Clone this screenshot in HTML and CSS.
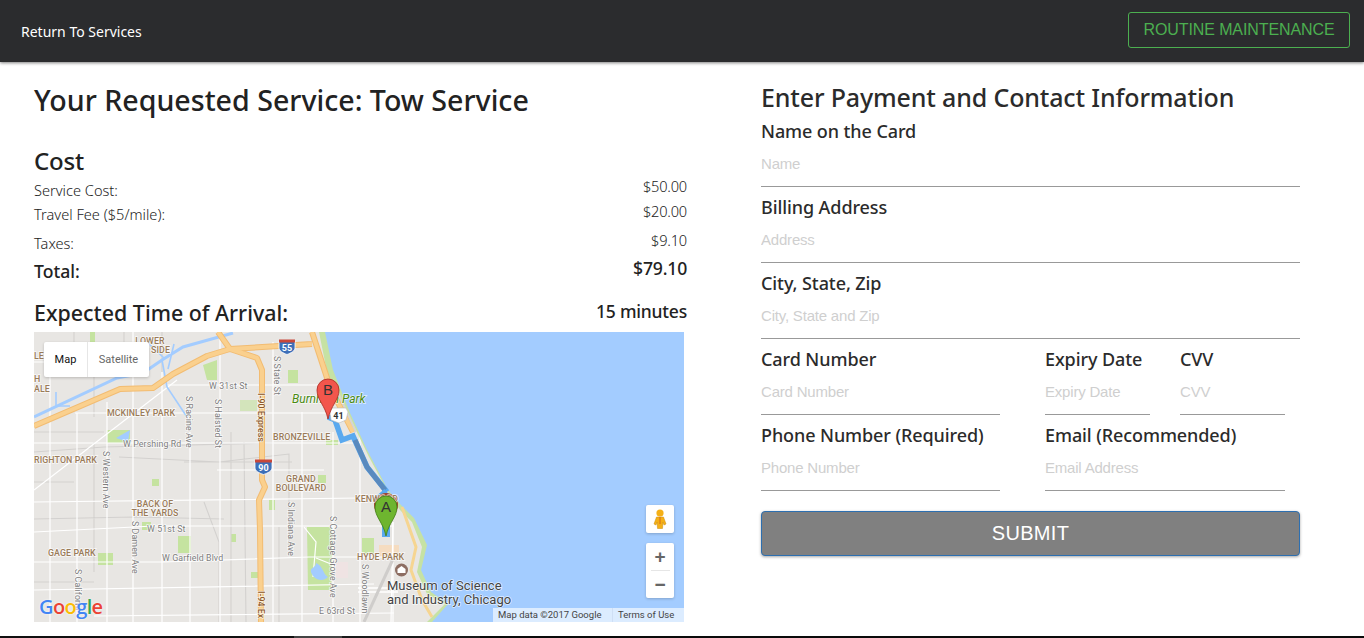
FILE: index.html
```html
<!DOCTYPE html>
<html lang="en">
<head>
<meta charset="utf-8">
<title>Tow Service</title>
<link rel="stylesheet" href="styles.css">
</head>
<body>
<div class="page">
  <header class="topbar">
    <a class="back" href="#">Return To Services</a>
    <button class="routine" type="button">ROUTINE MAINTENANCE</button>
  </header>
  <main class="content">
    <section class="left">
      <h1 class="title">Your Requested Service: Tow Service</h1>
      <h2 class="cost-title">Cost</h2>
      <div class="row row-service"><span class="lbl">Service Cost:</span><span class="val">$50.00</span></div>
      <div class="row row-travel"><span class="lbl">Travel Fee ($5/mile):</span><span class="val">$20.00</span></div>
      <div class="row row-taxes"><span class="lbl">Taxes:</span><span class="val">$9.10</span></div>
      <div class="row row-total"><span class="lbl">Total:</span><span class="val">$79.10</span></div>
      <div class="row row-eta"><span class="lbl">Expected Time of Arrival:</span><span class="val">15 minutes</span></div>
      <div class="map">
        <svg class="map-svg" viewBox="0 0 650 290" width="650" height="290" aria-label="Map of Chicago South Side">
          <rect width="650" height="290" fill="#e8e6e3"/>
          <!-- parks -->
          <g fill="#c5e3a0">
            <rect x="73" y="98" width="23" height="13"/>
            <path d="M273 195h24l2 12-2 51h-23z"/>
            <rect x="144" y="204" width="13" height="17"/>
            <rect x="118" y="147" width="7" height="7"/>
            <rect x="254" y="38" width="10" height="13"/>
            <path d="M169 33l14-5v20h-10z"/>
            <rect x="206" y="68" width="17" height="11" opacity=".6"/>
            <rect x="284" y="143" width="8" height="8"/>
            <rect x="64" y="221" width="15" height="12"/>
            <rect x="108" y="190" width="9" height="8"/>
            <rect x="197" y="202" width="5" height="8"/>
            <rect x="217" y="240" width="7" height="6"/>
            <rect x="235" y="168" width="6" height="10"/>
            <path d="M22 30h10l-3 13h-7z"/>
            <rect x="56" y="0" width="5" height="12"/>
            <rect x="328" y="206" width="12" height="16" />
            <rect x="292" y="108" width="12" height="5"/>
          </g>
          <rect x="345" y="213" width="20" height="12" fill="#f5dcc0"/>
          <rect x="300" y="230" width="14" height="16" fill="#efe3e3"/>
          <!-- minor roads -->
          <g stroke="#d3d1cf" stroke-width="1.1" fill="none">
            <path d="M0 100H70M0 120l70-5 170-4M85 125l100 5 70-8v100M258 130H150M0 187l100-2 90 2M60 110v130M0 250h60M210 110l2 180M197 100v190M245 195v95M170 170l15 40v80"/>
            <path d="M128 0v40M90 0v45M60 45v40M40 0v30M0 150h40"/>
          </g>
          <!-- white streets -->
          <g stroke="#fff" stroke-width="1.2" fill="none">
            <path d="M133 53H320M41 81H325M0 111H325M183 138H290M0 170L326 166M0 200L120 194H360M0 230H130L275 225H365M0 258L340 252M60 284L360 281"/>
            <path d="M16 30V290M43 81V290M73 70V290M99 0V290M128 40V290M156 100V290M186 0V290M239 10V290M268 80V290M299 100V290M326 100V290M359 190V290M0 30H45"/>
            <path d="M0 158L143 48M270 195l12 15-3 35M282 226l20 8M359 190l-2 100"/>
          </g>
          <path d="M324 256h40M324 260h40" stroke="#fff" stroke-width="1.5"/>
          <path d="M330 290l30-65" stroke="#cfcdcb" stroke-width="3" fill="none"/>
          <!-- canals -->
          <g stroke="#a3ccff" fill="none">
            <path d="M0 85L83 46 109 41 128 28 149 15 199 1" stroke-width="3"/>
            <path d="M128 28L133 55 153 85M115 12l15 14M140 12l-6 25M22 60v14h14" stroke-width="1.6"/>
            <path d="M82 106l14-8-2 12z" fill="#a3ccff" stroke="none"/>
            <path d="M280 245c-8-10 2-8 2-14 8 4 6 10 12 14-4 4-10 4-14 0z" fill="#a3ccff" stroke="none"/>
          </g>
          <!-- water -->
          <path d="M285 0L295 50 318 90 335 125 354 160 366 178 378 190 388 215 383 240 393 262 411 272 393 290H650V0Z" fill="#c6e2a4"/>
          <path d="M291 0L299 38 316 81 333 118 354 158 366 172 380 186 393 213 387 238 397 260 414 272 398 290H650V0Z" fill="#a3ccff"/>
          <!-- highways -->
          <g fill="none" stroke-linejoin="round">
            <path d="M0 94L86 57 119 56 139 42 173 24 196 17 223 26 228 38V148L231 155 225 168 226 198 227 290M184 0L196 17 278 12M278 0L296 55 319 100" stroke="#f2bc72" stroke-width="6"/>
            <path d="M0 94L86 57 119 56 139 42 173 24 196 17 223 26 228 38V148L231 155 225 168 226 198 227 290M184 0L196 17 278 12M278 0L296 55 319 100" stroke="#fad08e" stroke-width="4"/>
            <path d="M368 175L382 215 377 238 388 268 398 285" stroke="#f6d591" stroke-width="3"/>
          </g>
          <path d="M300 52L322 100" stroke="#d7d5d2" stroke-width="2"/>
          <!-- route -->
          <path d="M294 85L301 88 308 108 319 104 333 135 353 160" fill="none" stroke="#5aa9ef" stroke-width="5.500"/>
          <path d="M321 108L333 135 351 158" fill="none" stroke="#5a85b5" stroke-width="5" opacity=".85"/>
          <path d="M353 160L344 168 352 172V205" fill="none" stroke="#5aa9ef" stroke-width="8" stroke-linejoin="round"/>
          <!-- museum marker, shield badges -->
          <circle cx="367.500" cy="238" r="6.500" fill="#8d6e63"/>
          <path d="M363.500 237l4-3 4 3v4h-8z" fill="#fff"/>
          <circle cx="352" cy="173" r="12" fill="#a1422e"/>
          <g>
            <path d="M245 9h16v7c0 3-4 5-8 6.500C249 21 245 19 245 16z" fill="#3d6fb8" stroke="#fff" stroke-width=".8"/>
            <path d="M245 7.500h16v3h-16z" fill="#c9483a"/>
            <text class="shield" x="253" y="19" text-anchor="middle">55</text>
          </g>
          <g>
            <path d="M221 129h17v7c0 3-4 5-8.500 6.500C225 141 221 139 221 136z" fill="#3d6fb8" stroke="#fff" stroke-width=".8"/>
            <path d="M221 127.500h17v3h-17z" fill="#c9483a"/>
            <text class="shield" x="229.500" y="139" text-anchor="middle">90</text>
          </g>
          <path d="M298 76h14l2 4-2 8-7 3-8-3-1-8z" fill="#fff" stroke="#bbb" stroke-width=".6"/>
          <text class="shield dark" x="304.500" y="87" text-anchor="middle">41</text>
          <!-- labels -->
          <g class="lab tan">
            <text x="116" y="12" text-anchor="middle">LOWER</text>
            <text x="120" y="21" text-anchor="middle">ST SIDE</text>
            <text x="0" y="27">LE V</text>
            <text x="0" y="50">H</text>
            <text x="0" y="60">ALE</text>
            <text x="107" y="84" text-anchor="middle">MCKINLEY PARK</text>
            <text x="0" y="131">RIGHTON PARK</text>
            <text x="239" y="108">BRONZEVILLE</text>
            <text x="267" y="150" text-anchor="middle">GRAND</text>
            <text x="267" y="159" text-anchor="middle">BOULEVARD</text>
            <text x="121" y="175" text-anchor="middle">BACK OF</text>
            <text x="121" y="184" text-anchor="middle">THE YARDS</text>
            <text x="14" y="224">GAGE PARK</text>
            <text x="321" y="170">KENWOOD</text>
            <text x="323" y="228">HYDE PARK</text>
          </g>
          <g class="lab gray">
            <text x="175" y="57">W 31st St</text>
            <text x="89" y="115">W Pershing Rd</text>
            <text x="113" y="200">W 51st St</text>
            <text x="128" y="229">W Garfield Blvd</text>
            <text x="285" y="282">E 63rd St</text>
            <text transform="translate(240 24) rotate(90)">S State St</text>
            <text transform="translate(152 64) rotate(90)">S Racine Ave</text>
            <text transform="translate(181 67) rotate(90)">S Halsted St</text>
            <text transform="translate(69 119) rotate(90)">S Western Ave</text>
            <text transform="translate(98 189) rotate(90)">S Damen Ave</text>
            <text transform="translate(41 237) rotate(90)">S Californi</text>
            <text transform="translate(254 170) rotate(90)">S Indiana Ave</text>
            <text transform="translate(296 184) rotate(90)">S Cottage Grove Ave</text>
            <text transform="translate(328 232) rotate(90)">S Woodlawn</text>
          </g>
          <g class="lab brown">
            <text transform="translate(224 61) rotate(90)">I-90 Express</text>
            <text transform="translate(224 259) rotate(90)">I-94 Ex</text>
          </g>
          <text class="park" x="258" y="71">Burnham Park</text>
          <text class="poi" x="353" y="258">Museum of Science</text>
          <text class="poi" x="353" y="272">and Industry, Chicago</text>
          <!-- pins -->
          <path d="M294 87C291 73 283 68 283 58a11 11 0 0 1 22 0C305 68 297 73 294 87Z" fill="#f2564c" stroke="#a8281f" stroke-width=".8"/>
          <text class="pin" x="294" y="63" text-anchor="middle">B</text>
          <path d="M352 204C349 190 341 185 341 175a11 11 0 0 1 22 0C363 185 355 190 352 204Z" fill="#6eb52f" stroke="#3f7d14" stroke-width=".8"/>
          <text class="pin" x="352" y="180" text-anchor="middle">A</text>
        </svg>
        <div class="maptype"><span class="maptype-on">Map</span><span class="maptype-off">Satellite</span></div>
        <div class="pegman">
          <svg viewBox="0 0 28 28" width="28" height="28"><circle cx="14" cy="8" r="3.600" fill="#f5b016"/><path d="M10.500 12h7l2.500 7-2 1-1-3-.5 6.500h-5l-.5-6.500-1 3-2-1z" fill="#f5b016" stroke="#c88a0c" stroke-width=".5"/><path d="M14 12v7" stroke="#d2691e" stroke-width="1"/></svg>
        </div>
        <div class="zoomctl">
          <span class="zoom-btn">+</span>
          <span class="zoom-sep"></span>
          <span class="zoom-btn">−</span>
        </div>
        <div class="google"><span class="gb">G</span><span class="gr">o</span><span class="gy">o</span><span class="gb">g</span><span class="gg">l</span><span class="gr">e</span></div>
        <div class="attrib"><span class="attrib-a">Map data ©2017 Google</span><span class="attrib-b">Terms of Use</span></div>
      </div>
    </section>
    <form class="right">
      <h2 class="form-title">Enter Payment and Contact Information</h2>
      <label class="field"><span class="flabel">Name on the Card</span><input class="finput" placeholder="Name"></label>
      <label class="field"><span class="flabel">Billing Address</span><input class="finput" placeholder="Address"></label>
      <label class="field"><span class="flabel">City, State, Zip</span><input class="finput" placeholder="City, State and Zip"></label>
      <div class="field-row">
        <label class="field w239"><span class="flabel">Card Number</span><input class="finput" placeholder="Card Number"></label>
        <label class="field w105 gap45"><span class="flabel">Expiry Date</span><input class="finput" placeholder="Expiry Date"></label>
        <label class="field w105 gap30"><span class="flabel">CVV</span><input class="finput" placeholder="CVV"></label>
      </div>
      <div class="field-row">
        <label class="field w239"><span class="flabel">Phone Number (Required)</span><input class="finput" placeholder="Phone Number"></label>
        <label class="field w240 gap45"><span class="flabel">Email (Recommended)</span><input class="finput" placeholder="Email Address"></label>
      </div>
      <button class="submit" type="button">SUBMIT</button>
    </form>
  </main>
  <div class="strip"></div>
</div>
</body>
</html>
```
FILE: styles.css
```css
* { box-sizing: border-box; }
html, body { margin: 0; padding: 0; height: 100%; overflow: hidden; background: #fff; }
body { font-family: "Noto Sans", "Open Sans", sans-serif; color: #222; }
.page { height: 638px; display: flex; flex-direction: column; }

.topbar {
  height: 62px; flex: none; background: #2b2c2e; display: flex; align-items: center;
  justify-content: space-between; padding: 0 14px 0 21px;
  box-shadow: 0 1px 3px rgba(0,0,0,.5); position: relative; z-index: 2;
}
.back { color: #fff; font-size: 14px; text-decoration: none; letter-spacing: 0; margin-top: 1px; }
.routine {
  width: 222px; height: 36px; margin-top: -2px; background: transparent; border: 1px solid #4caf50;
  border-radius: 3px; color: #4caf50; font: 16px "Liberation Sans", Arial, sans-serif; letter-spacing: -.1px; padding: 0;
}

.content { flex: 1; display: flex; min-height: 0; padding-left: 34px; }
.left { width: 653px; flex: none; padding-top: 19px; }
.right { width: 539px; flex: none; margin-left: 74px; padding-top: 17px; }

.title { margin: 0; font-size: 28.6px; line-height: 38px; font-weight: 500; color: #222; }
.cost-title { margin: 25px 0 0; font-size: 24px; line-height: 34px; font-weight: 500; letter-spacing: -.2px; }

.row { display: flex; justify-content: space-between; align-items: flex-start; }
.row .lbl { display: block; }
.row .val { display: block; letter-spacing: -.2px; }
.row-service, .row-travel, .row-taxes { font-size: 14.6px; line-height: 20px; font-weight: 300; color: #222; }
.row-service { margin-top: -2px; height: 25px; }
.row-service .lbl { padding-top: 4px; }
.row-travel { height: 29px; }
.row-travel .lbl { padding-top: 3px; }
.row-taxes { height: 26px; }
.row-taxes .lbl { padding-top: 3px; }
.row-total { font-size: 17.6px; line-height: 22px; font-weight: 500; height: 42px; padding-top: 1px; }
.row-total .lbl { padding-top: 3px; }
.row-eta { height: 34px; padding-top: 1px; }
.row-eta .lbl { font-size: 21.4px; line-height: 28px; font-weight: 500; }
.row-eta .val { font-size: 17.5px; line-height: 24px; font-weight: 500; letter-spacing: -.2px; }

.map { position: relative; width: 650px; height: 290px; overflow: hidden; }
.map-svg { display: block; }
.lab text { font: 500 8.8px "Roboto", sans-serif; paint-order: stroke; stroke: rgba(255,255,255,.75); stroke-width: 1.5px; }
.lab.tan text { fill: #9a7b58; letter-spacing: .1px; }
.lab.gray text { fill: #7d7d7d; letter-spacing: .1px; font-weight: 400; }
.lab.brown text { fill: #8d5a2a; }
.shield { font: 700 9px "Roboto", sans-serif; fill: #fff; }
.shield.dark { fill: #333; }
.park { font: italic 12px "Roboto", sans-serif; fill: #4a8a12; paint-order: stroke; stroke: rgba(255,255,255,.7); stroke-width: 1.5px; }
.poi { font: 13px "Roboto", sans-serif; fill: #444; paint-order: stroke; stroke: rgba(255,255,255,.7); stroke-width: 1.5px; }
.pin { font: 15px "Liberation Sans", sans-serif; fill: #333; }

.maptype {
  position: absolute; left: 10px; top: 10px; width: 105px; height: 35px; background: #fff; border-radius: 2px;
  display: flex; font: 11px "Roboto", sans-serif; box-shadow: 0 1px 3px rgba(0,0,0,.2); align-items: stretch;
}
.maptype span { display: flex; align-items: center; justify-content: center; }
.maptype-on { width: 44px; color: #111; border-right: 1px solid #e6e6e6; }
.maptype-off { flex: 1; color: #666; }
.pegman, .zoomctl { position: absolute; left: 612px; width: 28px; background: #fff; border-radius: 2px; box-shadow: 0 1px 3px rgba(0,0,0,.2); }
.pegman { top: 173px; height: 28px; }
.pegman svg { display: block; }
.zoomctl { top: 211px; height: 55px; display: flex; flex-direction: column; align-items: center; }
.zoom-btn { height: 27px; width: 28px; font: 700 19px/27px "Liberation Sans", sans-serif; color: #666; text-align: center; }
.zoom-sep { width: 19px; height: 1px; background: #e6e6e6; flex: none; }
.google { position: absolute; left: 5px; top: 263px; font: 600 20px/24px "Open Sans", sans-serif; letter-spacing: -.6px; text-shadow: 0 0 2px #fff; }
.gb { color: #4285f4; } .gr { color: #ea4335; } .gy { color: #fbbc05; } .gg { color: #34a853; }
.attrib { position: absolute; right: 0; bottom: 0; height: 14px; display: flex; font: 9.5px/14px "Roboto", sans-serif; color: #444; background: rgba(255,255,255,.62); }
.attrib-a { width: 120px; padding-left: 5px; border-right: 1px solid #cfdff5; }
.attrib-b { width: 71px; padding-left: 5px; }

.form-title { margin: 0; font-size: 25px; line-height: 36px; height: 40px; font-weight: 500; letter-spacing: -.15px; color: #2b2b2b; }
.field { display: block; height: 76px; }
.flabel { display: block; font-size: 18px; line-height: 24px; font-weight: 500; letter-spacing: -.09px; color: #2b2b2b; height: 24px; }
.finput {
  display: block; width: 100%; height: 47px; margin-top: -3px; border: 0; border-bottom: 1px solid #999; outline: 0; padding: 0;
  font: 15px "Liberation Sans", Arial, sans-serif; letter-spacing: -.2px; background: transparent;
}
.finput::placeholder { color: #cfcfcf; opacity: 1; }
.field-row { display: flex; }
.w239 { width: 239px; }
.w105 { width: 105px; }
.w240 { width: 240px; }
.gap45 { margin-left: 45px; }
.gap30 { margin-left: 30px; }
.submit {
  display: block; width: 539px; height: 45px; margin-top: 12px; background: #808080; color: #fff; border: 1px solid #2d6fb0;
  border-radius: 4px; font: 20px "Liberation Sans", Arial, sans-serif; letter-spacing: .3px; box-shadow: 0 1px 3px rgba(0,0,0,.35);
}
.strip { height: 2px; flex: none; background: linear-gradient(90deg, #111 0 294px, #444 294px 342px, #1a1a1a 342px 480px, #0a0a0a 480px 100%); }
```
